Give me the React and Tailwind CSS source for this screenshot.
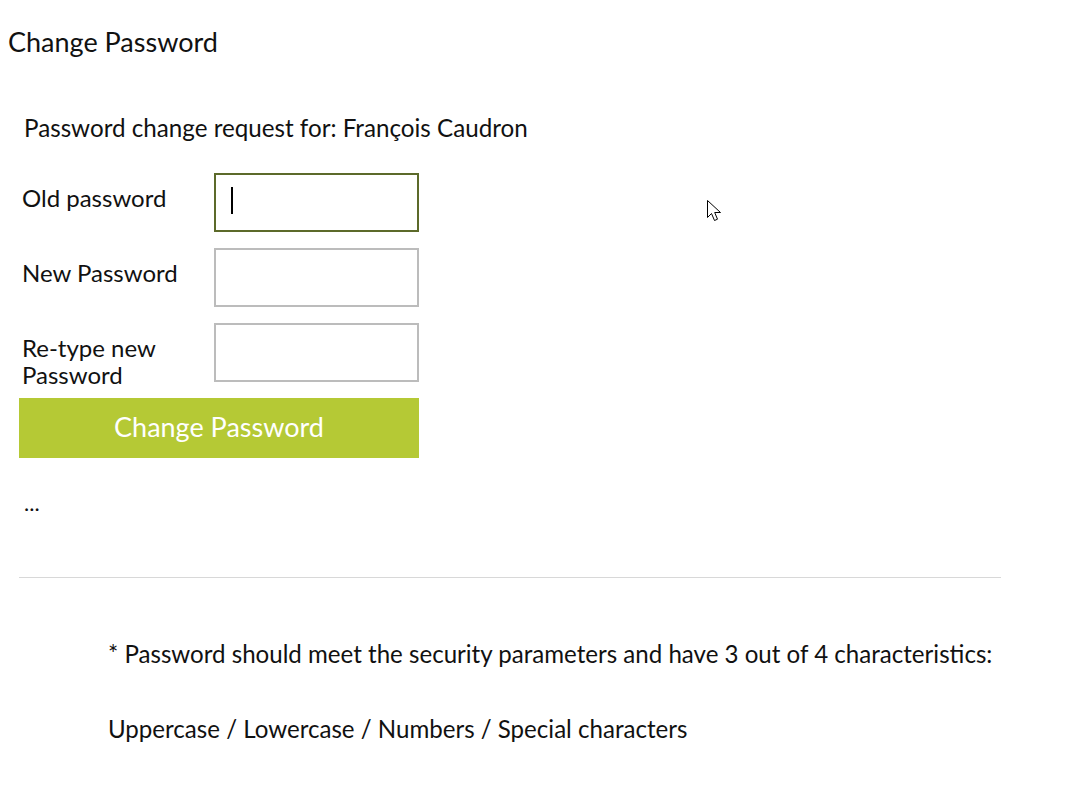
import React from 'react'

const fields = [
  { label: 'Old password', focused: true },
  { label: 'New Password' },
  { label: ['Re-type new', 'Password'] }
]

export default function App() {
  return (
    <div className="relative min-h-[788px] bg-white text-[#111] font-['Lato',sans-serif]">
      <h1 className="pl-2 pt-[25px] text-[27px] leading-[34px]">Change Password</h1>

      <div className="pl-[19px] pt-[54px]">
        <p className="pl-[5px] text-[24.2px] leading-[30px]">Password change request for: François Caudron</p>

        <div className="mt-[30px] flex w-[400px] flex-col gap-[16px]">
          {fields.map((f, i) => (
            <div key={i} className="flex h-[59px] items-start">
              <div className="w-[195px] pl-[3px] pt-[11px] text-[24px] leading-[27px]">
                {Array.isArray(f.label) ? f.label.map((l) => <div key={l}>{l}</div>) : f.label}
              </div>
              <div
                className={
                  'relative h-[59px] w-[205px] border-2 ' +
                  (f.focused ? 'border-[#5c6a2a]' : 'border-[#bcbcbc]')
                }
              >
                {f.focused && <div className="absolute left-[15px] top-[12px] h-[27px] w-[2px] bg-black" />}
              </div>
            </div>
          ))}
        </div>

        <button className="mt-[16px] h-[60px] w-[400px] bg-[#b5c935] pb-[2px] text-[27px] text-white">
          Change Password
        </button>

        <p className="pl-[5px] pt-[35px] text-[22px] leading-[20px]">...</p>

        <hr className="mt-[64px] w-[982px] border-t border-[#d8d8d8]" />
      </div>

      <div className="pl-[108px] pt-[61px] text-[24.1px] leading-[30px]">
        <p>* Password should meet the security parameters and have 3 out of 4 characteristics:</p>
        <p className="mt-[45px]">Uppercase / Lowercase / Numbers / Special characters</p>
      </div>

      <svg className="absolute left-[706px] top-[199px]" width="20" height="28" viewBox="0 0 20 28">
        <path d="M1.5 1.5 L1.5 18.5 L5.5 14.5 L8.5 21.5 L11.5 20.2 L8.7 13.5 L14.5 13.5 Z" fill="white" stroke="black" strokeWidth="1" strokeLinejoin="miter" />
      </svg>
    </div>
  )
}
